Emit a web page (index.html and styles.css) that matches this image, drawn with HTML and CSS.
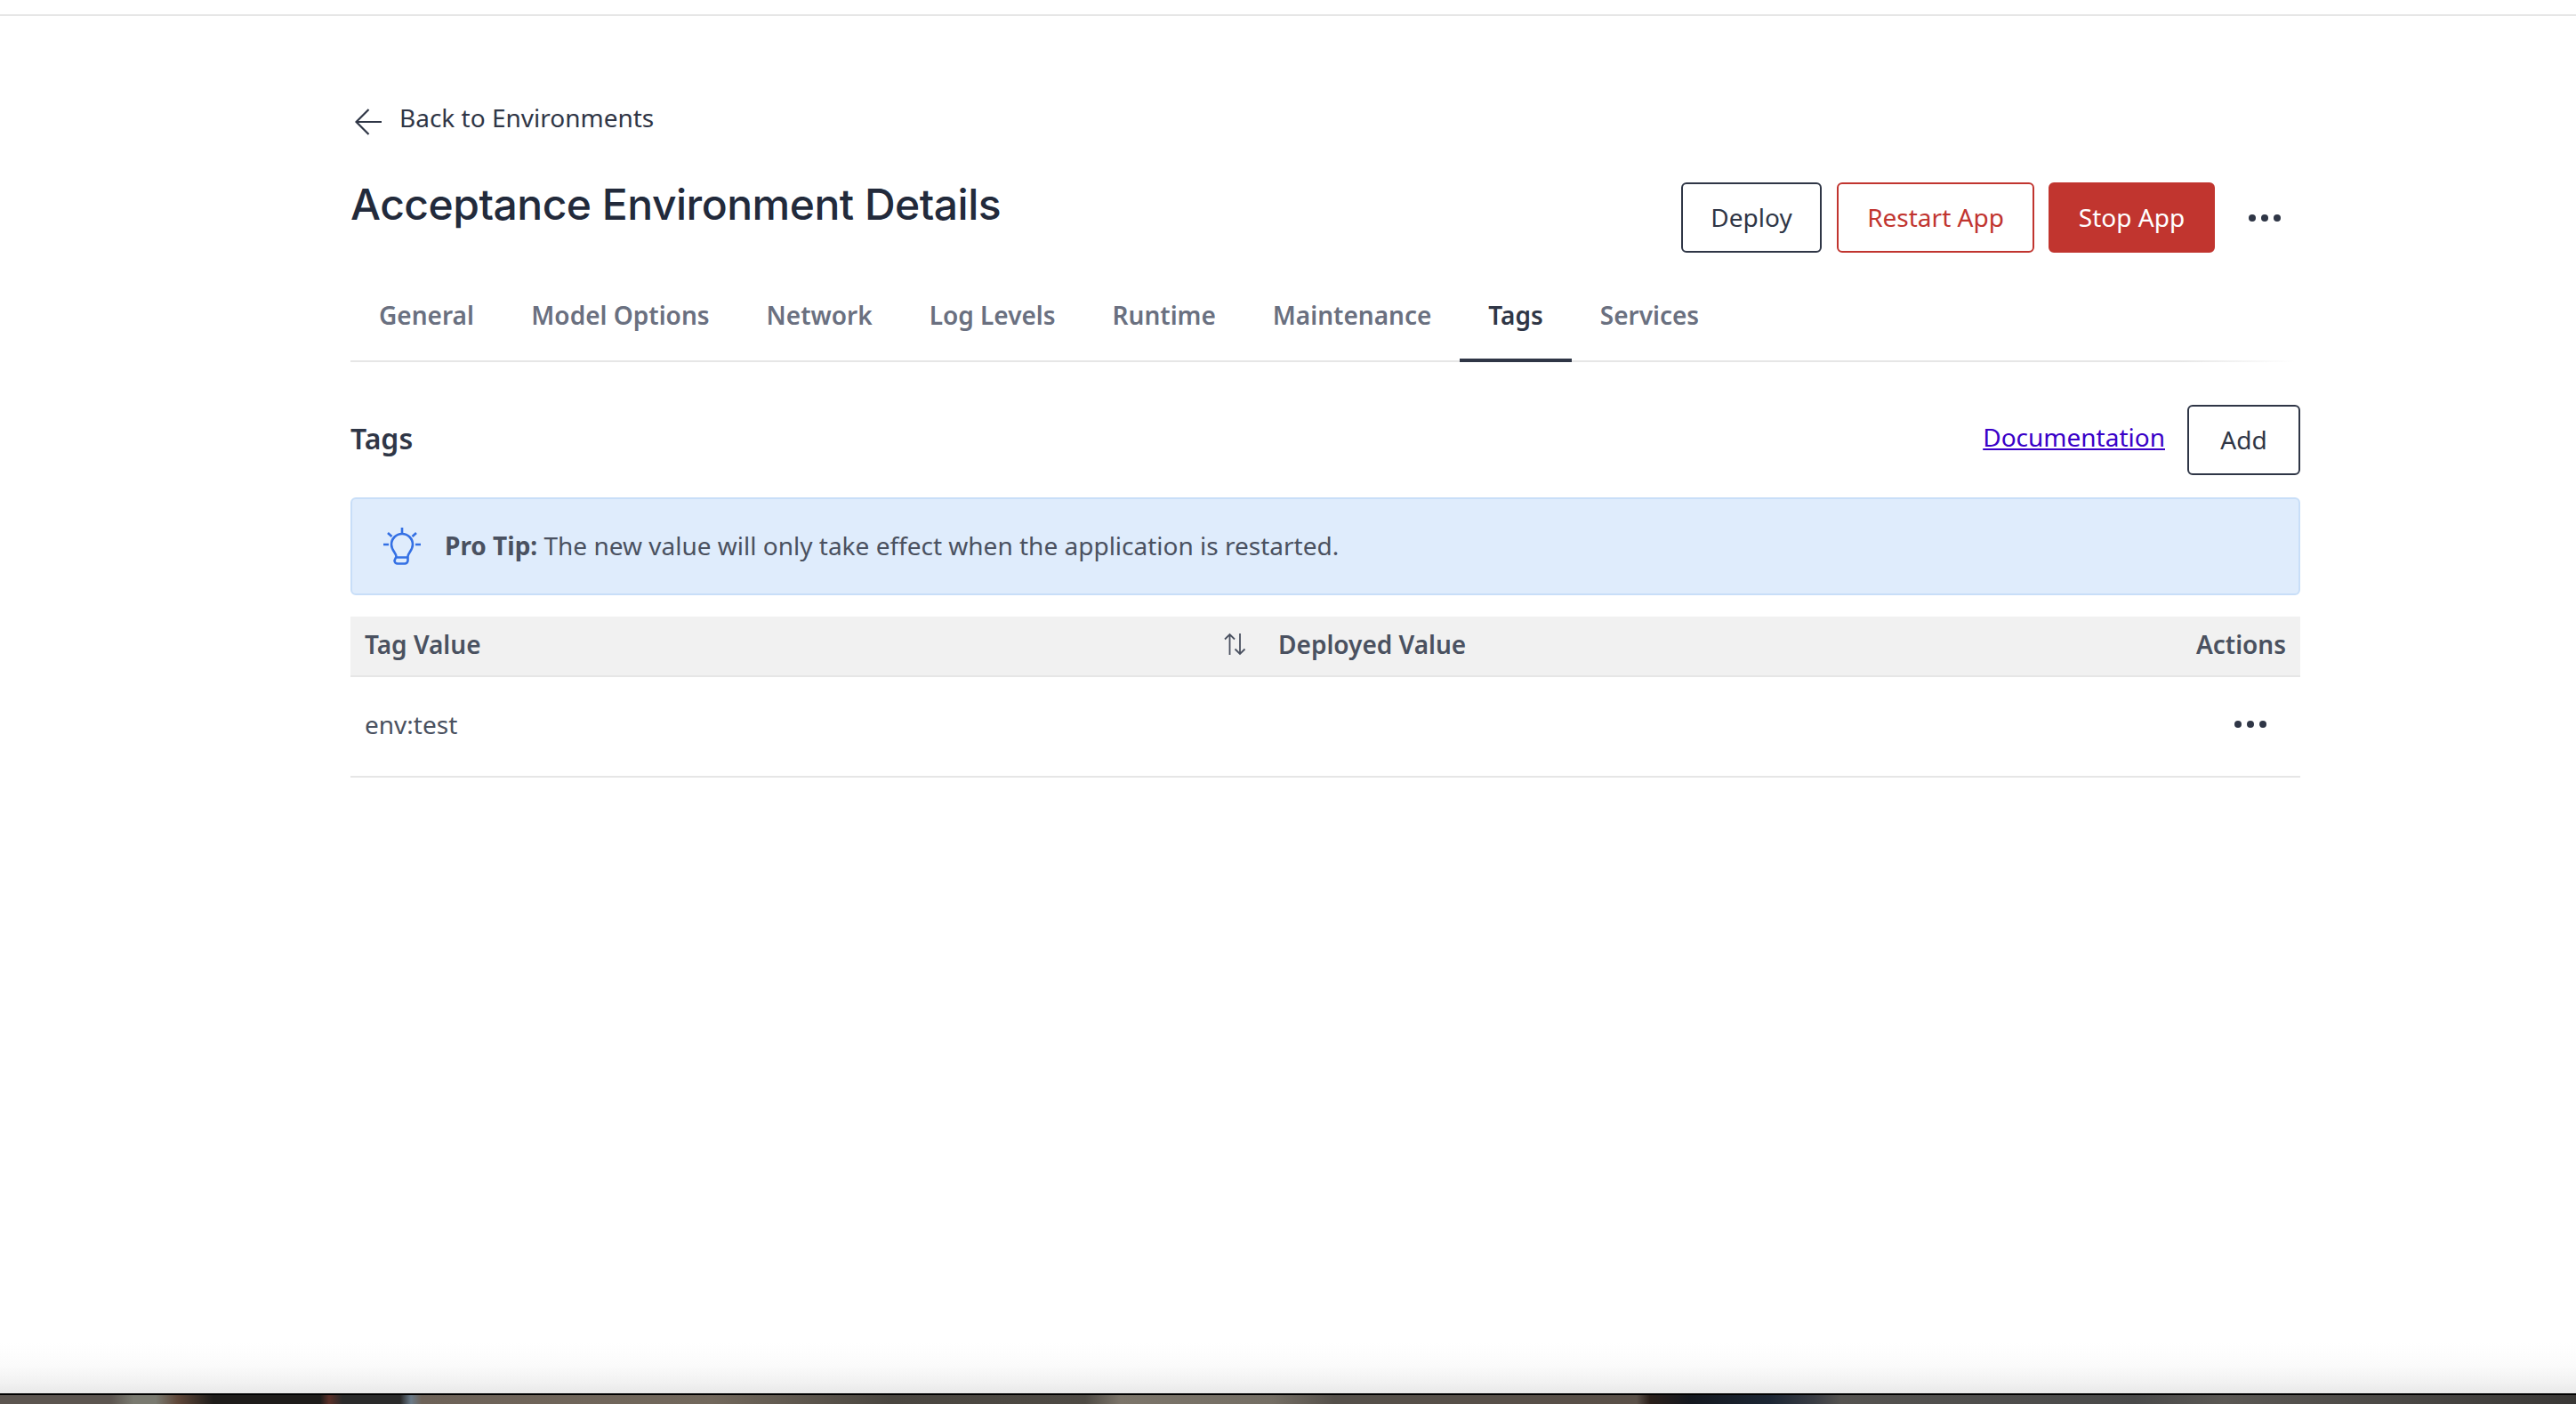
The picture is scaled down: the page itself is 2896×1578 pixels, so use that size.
FILE: index.html
```html
<!DOCTYPE html>
<html lang="en">

<head>
    <meta charset="UTF-8">
    <title>Acceptance Environment Details</title>
    <link rel="stylesheet" href="styles.css">
</head>

<body>
    <div class="top-line"></div>
    <div class="page">
        <a class="back-link" href="#">
            <svg class="back-icon" width="30" height="30" viewBox="0 0 30 30" fill="none" stroke="#2f3646" stroke-width="2.2">
                <path d="M30 15H2M15.500 1L1.500 15L15.500 29" />
            </svg>
            <span>Back to Environments</span>
        </a>

        <div class="title-row">
            <h1>Acceptance Environment Details</h1>
            <div class="title-actions">
                <button class="btn btn-dark">Deploy</button>
                <button class="btn btn-red">Restart App</button>
                <button class="btn btn-stop">Stop App</button>
                <div class="dots dots-title"><i></i><i></i><i></i></div>
            </div>
        </div>

        <div class="tabs">
            <div class="tab">General</div>
            <div class="tab">Model Options</div>
            <div class="tab">Network</div>
            <div class="tab">Log Levels</div>
            <div class="tab">Runtime</div>
            <div class="tab">Maintenance</div>
            <div class="tab active">Tags</div>
            <div class="tab">Services</div>
        </div>

        <div class="section-head">
            <h2>Tags</h2>
            <div class="section-actions">
                <a class="doc-link" href="#">Documentation</a>
                <button class="btn btn-dark btn-add">Add</button>
            </div>
        </div>

        <div class="tip">
            <svg class="tip-icon" width="44" height="44" viewBox="0 0 44 44" fill="none" stroke="#3470e4" stroke-width="2.6">
                <path d="M22 1v6M1 20h6M37 20h6M6 7l4.500 4M38 7l-4.500 4" />
                <path d="M15.500 33.500c0-4-5.500-7-5.500-13.500a12 12 0 0 1 24 0c0 6.500-5.500 9.500-5.500 13.500v4.500a3.500 3.500 0 0 1-3.500 3.500h-8a3.500 3.500 0 0 1-3.500-3.500zM15.500 34.500h13" />
            </svg>
            <p><strong>Pro Tip:</strong> The new value will only take effect when the application is restarted.</p>
        </div>

        <table class="tags-table">
            <thead>
                <tr>
                    <th class="col-tag">
                        <div class="th-sort">
                            <span>Tag Value</span>
                            <svg width="26" height="26" viewBox="0 0 26 26" fill="none" stroke="#4a5160" stroke-width="1.800">
                                <path d="M7.500 25V2M2 7.500L7.500 2L13 7.500M19 1v23M13.500 18.500L19 24L24.500 18.500" />
                            </svg>
                        </div>
                    </th>
                    <th>Deployed Value</th>
                    <th class="col-actions">Actions</th>
                </tr>
            </thead>
            <tbody>
                <tr>
                    <td>env:test</td>
                    <td></td>
                    <td class="col-actions">
                        <div class="dots dots-row"><i></i><i></i><i></i></div>
                    </td>
                </tr>
            </tbody>
        </table>
    </div>
    <div class="window-shade"></div>
    <div class="wallpaper"></div>
</body>

</html>
```

FILE: styles.css
```css
* {
    box-sizing: border-box;
}

html,
body {
    height: 100%;
}

body {
    margin: 0;
    display: flex;
    flex-direction: column;
    overflow: hidden;
    background-color: #fff;
    font-family: "Noto Sans", "Liberation Sans", sans-serif;
    font-size: 28px;
    color: #2f3646;
}

.top-line {
    height: 18px;
    flex: none;
    border-bottom: 2px solid #e6e6e6;
}

.page {
    flex: 1;
    padding: 94px 310px 0 394px;
}

/* back link */
.back-link {
    display: flex;
    align-items: center;
    gap: 20px;
    height: 40px;
    padding-left: 5px;
    color: #2f3646;
    text-decoration: none;
}

.back-icon {
    margin-top: 9px;
}

/* title row */
.title-row {
    display: flex;
    justify-content: space-between;
    align-items: flex-start;
    margin-top: 35px;
    padding-right: 22px;
}

h1 {
    margin: 0;
    padding-top: 12px;
    font-family: Inter, "Liberation Sans", sans-serif;
    font-size: 48px;
    line-height: 62px;
    font-weight: 500;
    letter-spacing: -0.5px;
    color: #222a3b;
}

.title-actions {
    display: flex;
    align-items: center;
    margin-top: 18px;
}

.btn {
    height: 79px;
    padding: 0 0 2px;
    border: 2px solid #2f3646;
    border-radius: 6px;
    background-color: #fff;
    font-family: inherit;
    font-size: 28px;
    color: #2f3646;
}

.title-actions .btn-dark {
    width: 158px;
    margin-right: 17px;
}

.btn-red {
    width: 222px;
    margin-right: 16px;
    border-color: #c1352f;
    color: #c1352f;
}

.btn-stop {
    width: 187px;
    margin-right: 38px;
    border-color: #c1352f;
    background-color: #c1352f;
    color: #fff;
}

.dots {
    display: flex;
}

.dots i {
    display: block;
    width: 8px;
    height: 8px;
    border-radius: 50%;
    background-color: #2f3646;
}

.dots-title {
    gap: 6px;
}

.dots-row {
    justify-content: flex-end;
    gap: 6px;
    padding-right: 22px;
}

/* tabs */
.tabs {
    display: flex;
    height: 84px;
    margin-top: 39px;
    margin-right: 6px;
    border-bottom: 2px solid;
    border-image: linear-gradient(to right, #e6e6e6 94%, #fff 100%) 1;
}

.tab {
    height: 84px;
    padding: 11px 32px 0;
    font-size: 28px;
    font-weight: 600;
    line-height: 40px;
    color: #6a7080;
}

.tab:first-child {
    padding-right: 32.500px;
}

.tab.active {
    border-bottom: 4px solid #2f3646;
    color: #2f3646;
}

/* section head */
.section-head {
    display: flex;
    justify-content: space-between;
    align-items: center;
    height: 79px;
    margin-top: 48px;
}

h2 {
    margin: -5px 0 0;
    font-size: 32px;
    font-weight: 600;
    color: #2f3646;
}

.section-actions {
    display: flex;
    align-items: center;
    gap: 25px;
}

.doc-link {
    margin-top: -8px;
    color: #3a00c8;
}

.btn-add {
    width: 127px;
}

/* pro tip */
.tip {
    display: flex;
    align-items: center;
    height: 110px;
    margin-top: 25px;
    padding-left: 34px;
    border: 2px solid #c8def8;
    border-radius: 6px;
    background-color: #dfecfc;
}

.tip-icon {
    flex: none;
    margin-right: 26px;
}

.tip p {
    margin: -2px 0 0;
    color: #4a5160;
}

/* table */
.tags-table {
    width: 100%;
    margin-top: 24px;
    border-collapse: collapse;
    table-layout: fixed;
}

.tags-table th {
    height: 67px;
    padding: 0 16px 4px;
    border-bottom: 2px solid #e6e6e6;
    background-color: #f1f1f1;
    font-weight: 600;
    text-align: left;
    color: #4a5160;
}

.tags-table .col-tag {
    width: 1027px;
}

.tags-table td {
    height: 113px;
    padding: 0 16px 6px;
    border-bottom: 2px solid #e6e6e6;
    color: #4a5160;
}

.tags-table .col-actions {
    text-align: right;
}

.th-sort {
    display: flex;
    justify-content: space-between;
    align-items: center;
    margin-right: 4px;
}

/* bottom of the window */
.window-shade {
    height: 57px;
    flex: none;
    background: linear-gradient(to bottom, #fff, #fbfbfb 45%, #f1f1f1 80%, #e8e8e8);
}

.wallpaper {
    height: 12px;
    flex: none;
    border-top: 2px solid #000;
    background: linear-gradient(to right, #5c5550 0, #5c5550 125px, #7a7a70 150px, #7a7a70 175px, #5e4638 200px, #1e1c1a 240px, #1e1c1a 360px, #5a3028 370px, #2a2a2a 385px, #2a2a2a 450px, #6a7a88 462px, #6d6258 474px, #72685c 800px, #4a4640 1000px, #4e4a44 1220px, #7c756a 1260px, #746e64 1430px, #55504a 1500px, #5a5048 1840px, #2a1f1a 1855px, #14181f 1900px, #1c2634 1990px, #3a3d44 2040px, #555350 2070px, #4a4a4a 2400px, #5b5854 2500px, #3a3836 2896px);
}
```
